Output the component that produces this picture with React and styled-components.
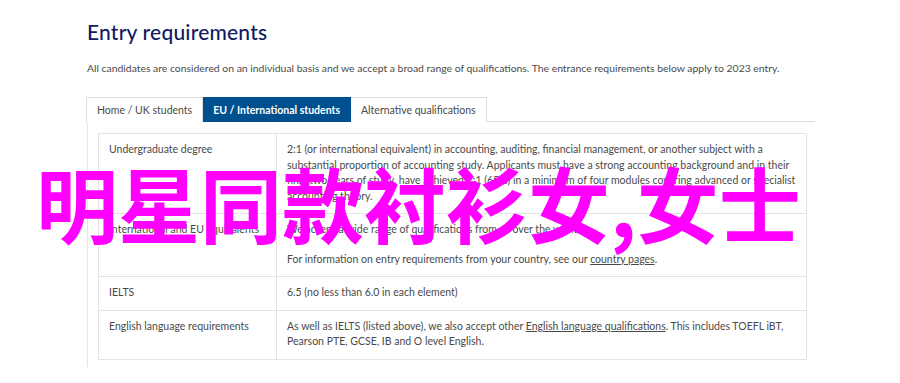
import React, { useState } from "react";
import styled, { createGlobalStyle } from "styled-components";

const GlobalStyle = createGlobalStyle`
  body {
    margin: 0;
    background: #fff;
    font-family: Lato, "Open Sans", "Liberation Sans", sans-serif;
    color: #4a4a4a;
  }
`;

const Page = styled.div`
  position: relative;
  width: 900px;
  height: 383px;
  overflow: hidden;
  padding: 18px 0 0 87px;
  box-sizing: border-box;
`;

const Title = styled.h2`
  margin: 0;
  font-size: 21px;
  line-height: 28px;
  font-weight: 500;
  color: #101b63;
  letter-spacing: 0.2px;
`;

const Intro = styled.p`
  margin: 15px 0 0;
  font-size: 10.4px;
  line-height: 15px;
  color: #4a4a4a;
`;

const TabList = styled.div`
  display: flex;
  width: 729px;
  margin: 21px 0 0 -1px;
  border-bottom: 1px solid #dedede;
`;

const Tab = styled.button`
  font-family: inherit;
  font-size: 10.5px;
  height: 25px;
  padding: 0 10px;
  margin-bottom: -1px;
  border: 1px solid ${(p) => (p.$active ? "#00508f" : "#dedede")};
  border-bottom: none;
  border-left-width: ${(p) => (p.$first ? 1 : 0)}px;
  background: ${(p) => (p.$active ? "#00508f" : "#fff")};
  color: ${(p) => (p.$active ? "#fff" : "#4a4a4a")};
  font-weight: ${(p) => (p.$active ? 700 : 400)};
  cursor: pointer;
`;

const Panel = styled.div`
  width: 719px;
  border-left: 1px solid #e6e6e6;
  padding: 11px 0 7px 10px;
`;

const Table = styled.table`
  width: 709px;
  border-collapse: collapse;
  font-size: 10.5px;
  line-height: 15.5px;
  color: #4a4a4a;
`;

const Cell = styled.td`
  border: 1px solid #e3e3e3;
  vertical-align: top;
  padding: 8px 10px 9px;
  width: ${(p) => p.$w || "auto"};
`;

const Para = styled.p`
  margin: 0;
  & + & {
    margin-top: 14px;
  }
`;

const Link = styled.a`
  color: inherit;
  text-decoration: underline;
`;

const Overlay = styled.div`
  position: absolute;
  left: 36px;
  top: 152px;
  font-family: "Noto Sans CJK SC", sans-serif;
  font-weight: 700;
  font-size: 82px;
  line-height: 100px;
  color: #ff00ff;
  white-space: nowrap;
  pointer-events: none;
`;

const tabs = ["Home / UK students", "EU / International students", "Alternative qualifications"];

export default function App() {
  const [active, setActive] = useState(1);
  return (
    <Page>
      <GlobalStyle />
      <Title>Entry requirements</Title>
      <Intro>
        All candidates are considered on an individual basis and we accept a broad range of
        qualifications. The entrance requirements below apply to 2023 entry.
      </Intro>
      <TabList>
        {tabs.map((t, i) => (
          <Tab key={t} $first={i === 0} $active={active === i} onClick={() => setActive(i)}>
            {t}
          </Tab>
        ))}
      </TabList>
      <Panel>
        <Table>
          <tbody>
            <tr>
              <Cell $w="157px">Undergraduate degree</Cell>
              <Cell>
                2:1 (or international equivalent) in accounting, auditing, financial management, or
                another subject with a substantial proportion of accounting study. Applicants must
                have a strong accounting background and in their final two years of study, have
                achieved 2:1 (65%) in a minimum of four modules covering advanced or specialist
                accounting theory.
              </Cell>
            </tr>
            <tr>
              <Cell>International and EU equivalents</Cell>
              <Cell>
                <Para>We accept a wide range of qualifications from all over the world.</Para>
                <Para>
                  For information on entry requirements from your country, see our{" "}
                  <Link href="#">country pages</Link>.
                </Para>
              </Cell>
            </tr>
            <tr>
              <Cell>IELTS</Cell>
              <Cell>6.5 (no less than 6.0 in each element)</Cell>
            </tr>
            <tr>
              <Cell>English language requirements</Cell>
              <Cell>
                As well as IELTS (listed above), we also accept other{" "}
                <Link href="#">English language qualifications</Link>. This includes TOEFL iBT,
                Pearson PTE, GCSE, IB and O level English.
              </Cell>
            </tr>
          </tbody>
        </Table>
      </Panel>
      <Overlay>明星同款衬衫女,女士</Overlay>
    </Page>
  );
}
